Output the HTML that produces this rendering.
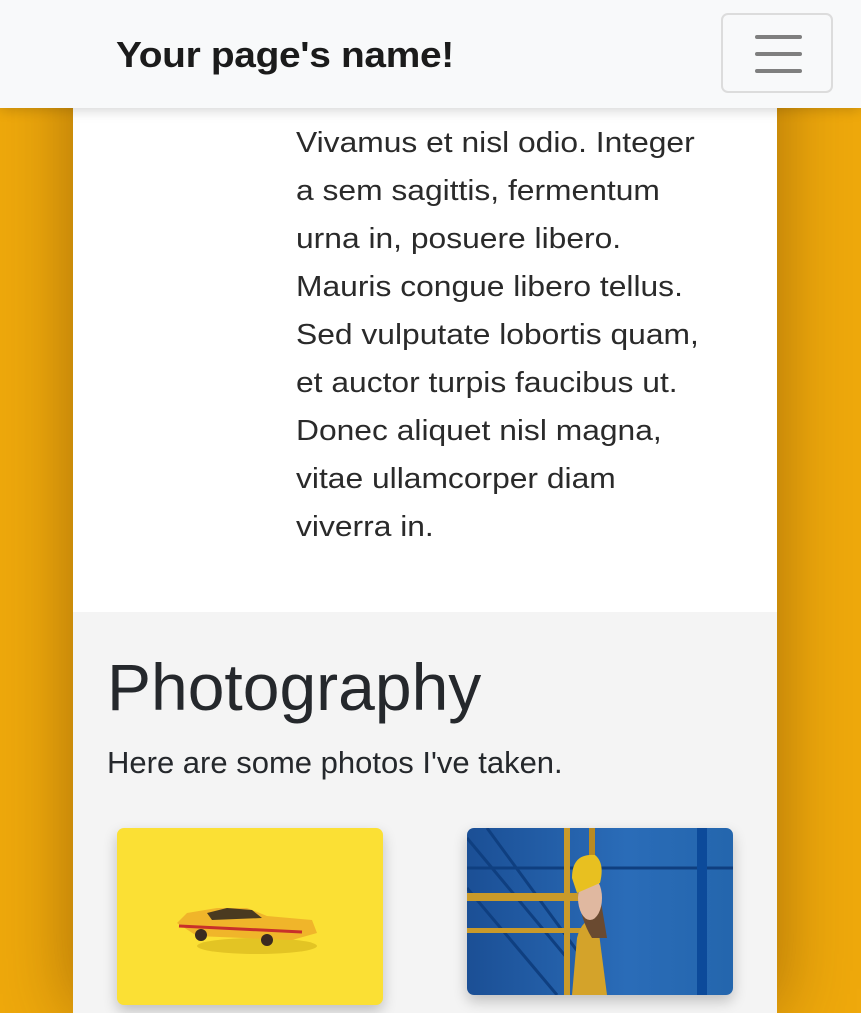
<!DOCTYPE html>
<html><head><meta charset="utf-8"><style>
*{margin:0;padding:0;box-sizing:border-box}
html,body{width:861px;height:1013px;overflow:hidden;background:#efa90c;font-family:"Liberation Sans",sans-serif;color:#212529}
.col{position:absolute;left:73px;top:0;width:704px;height:1013px;background:#fff;box-shadow:0 0 70px rgba(80,40,0,.45)}
.nav{position:absolute;left:0;top:0;width:861px;height:108px;background:#f8f9fa;box-shadow:0 2px 12px rgba(0,0,0,.18);z-index:5}
.brand{position:absolute;left:116px;top:34px;font-size:36px;font-weight:bold;color:#1b1b1b;letter-spacing:-.3px;transform:scaleX(1.08);transform-origin:left;white-space:nowrap}
.tog{position:absolute;left:721px;top:13px;width:112px;height:80px;border:2px solid #dcdcdc;border-radius:7px}
.tog i{position:absolute;left:32px;width:47px;height:4px;border-radius:2px;background:#7f7f7f}
.p{position:absolute;left:296px;font-size:29px;color:#2a2a2a;white-space:nowrap;transform:scaleX(1.096);transform-origin:left}
.sec{position:absolute;left:73px;top:612px;width:704px;height:401px;background:#f4f4f4}
h1{position:absolute;left:107px;top:649px;font-size:66px;font-weight:normal;color:#25282c;white-space:nowrap}
.sub{position:absolute;left:107px;top:745px;font-size:31px;color:#25282c;white-space:nowrap}
.img{position:absolute;border-radius:7px;overflow:hidden;box-shadow:0 6px 14px rgba(0,0,0,.22)}
</style></head><body>
<div class="col"></div>
<div class="nav"><div class="brand">Your page's name!</div>
<div class="tog"><i style="top:20px"></i><i style="top:37px"></i><i style="top:54px"></i></div></div>
<div class="p" style="top:127px">Vivamus et nisl odio. Integer</div>
<div class="p" style="top:175px">a sem sagittis, fermentum</div>
<div class="p" style="top:223px">urna in, posuere libero.</div>
<div class="p" style="top:271px">Mauris congue libero tellus.</div>
<div class="p" style="top:319px">Sed vulputate lobortis quam,</div>
<div class="p" style="top:367px">et auctor turpis faucibus ut.</div>
<div class="p" style="top:415px">Donec aliquet nisl magna,</div>
<div class="p" style="top:463px">vitae ullamcorper diam</div>
<div class="p" style="top:511px">viverra in.</div>
<div class="sec"></div>
<h1>Photography</h1>
<div class="sub">Here are some photos I've taken.</div>
<div class="img" style="left:117px;top:828px;width:266px;height:177px;background:#fbe034">
<svg width="266" height="177"><ellipse cx="140" cy="118" rx="60" ry="8" fill="#d9b81e" opacity=".7"/>
<path d="M60 95 L70 85 L100 80 L130 80 L150 88 L195 92 L200 105 L175 112 L80 108 Z" fill="#f0b52a"/>
<path d="M90 85 L110 80 L135 82 L145 90 L95 92 Z" fill="#4a3a20"/>
<path d="M62 98 L185 104" stroke="#c8302a" stroke-width="3"/>
<circle cx="84" cy="107" r="6" fill="#3a2a20"/><circle cx="150" cy="112" r="6" fill="#3a2a20"/></svg></div>
<div class="img" style="left:467px;top:828px;width:266px;height:167px;background:linear-gradient(90deg,#1b4f95,#2a6cb8 60%,#2466ad)">
<svg width="266" height="167"><g stroke="#0f3f80" stroke-width="3" fill="none"><path d="M0 40 L266 40 M0 10 L100 130 M20 0 L130 150 M0 60 L90 167"/></g>
<rect x="230" y="0" width="10" height="167" fill="#0c4a9a"/>
<rect x="0" y="65" width="120" height="8" fill="#c99a2a"/><rect x="0" y="100" width="120" height="5" fill="#c99a2a"/>
<rect x="97" y="0" width="6" height="167" fill="#c99a2a"/><rect x="122" y="0" width="6" height="167" fill="#b98a20"/>
<path d="M110 110 Q115 90 130 90 L140 167 L105 167 Z" fill="#d4a32a"/>
<path d="M110 55 Q112 90 125 110 L140 110 L130 50 Z" fill="#6a4a30"/>
<ellipse cx="123" cy="70" rx="12" ry="22" fill="#e0b8a0"/>
<path d="M105 50 Q105 25 128 27 Q138 35 133 55 L110 65 Z" fill="#e8c020"/></svg></div>
</body></html>
